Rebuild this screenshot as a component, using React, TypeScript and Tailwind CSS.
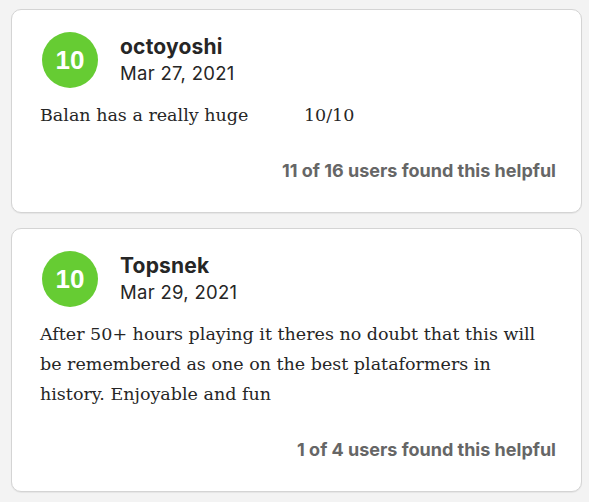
import React from "react";

interface Review {
  score: number;
  name: string;
  date: string;
  body: string;
  helpful: string;
}

const reviews: Review[] = [
  {
    score: 10,
    name: "octoyoshi",
    date: "Mar 27, 2021",
    body: "Balan has a really huge          10/10",
    helpful: "11 of 16 users found this helpful",
  },
  {
    score: 10,
    name: "Topsnek",
    date: "Mar 29, 2021",
    body: "After 50+ hours playing it theres no doubt that this will be remembered as one on the best plataformers in history. Enjoyable and fun",
    helpful: "1 of 4 users found this helpful",
  },
];

const ReviewCard: React.FC<{ review: Review }> = ({ review }) => (
  <div className="bg-white border border-[#d4d4d4] rounded-[10px] pl-[28px] pr-[25px] pt-[22px] pb-[30px] shadow-[0_1px_1px_rgba(0,0,0,0.06)]">
    <div className="flex items-center">
      <div className="ml-[2px] w-[56px] h-[56px] rounded-full bg-[#66cc33] flex items-center justify-center text-white text-[26px] font-bold font-['Liberation_Sans',sans-serif]">
        {review.score}
      </div>
      <div className="ml-[22px] font-['Inter',sans-serif] text-[#262626] -mt-[2px]">
        <div className="text-[21px] font-bold leading-[26px] tracking-[0.2px]">{review.name}</div>
        <div className="text-[18.5px] leading-[24px] mt-[1px] tracking-[0.3px]">{review.date}</div>
      </div>
    </div>
    <p className="mt-[12px] text-[17.5px] leading-[30px] text-[#262626] font-['DejaVu_Serif',serif] whitespace-pre-wrap">
      {review.body}
    </p>
    <div className="mt-[30px] text-right text-[18px] font-bold text-[#666] font-['Inter',sans-serif] leading-[22px]">
      {review.helpful}
    </div>
  </div>
);

export default function App() {
  return (
    <div className="min-h-[502px] bg-[#f3f3f3] pl-[11px] pr-[7px] pt-[9px] flex flex-col gap-[15px]">
      {reviews.map((r, i) => (
        <ReviewCard key={`review-${i}`} review={r} />
      ))}
    </div>
  );
}
